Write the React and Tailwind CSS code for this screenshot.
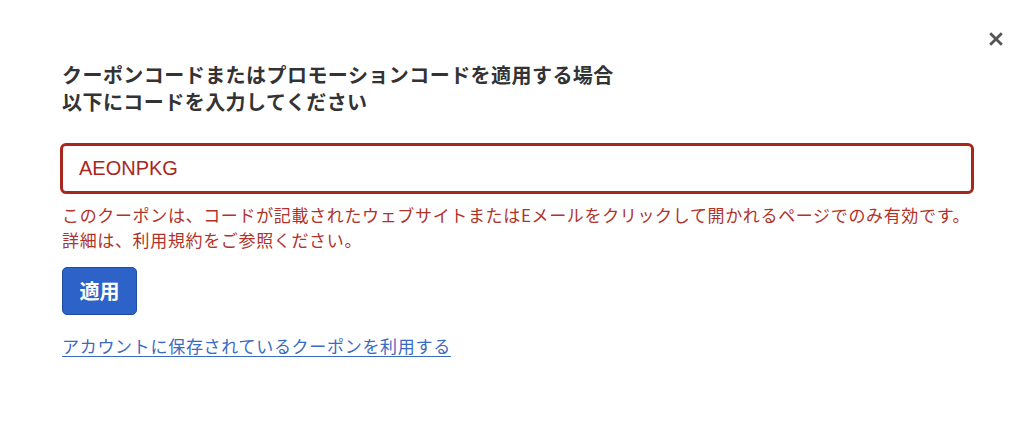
import { useState } from "react";

export default function App() {
  const [code, setCode] = useState("AEONPKG");

  return (
    <div
      className="relative w-[1024px] h-[430px] bg-white text-[#333333]"
      style={{ fontFamily: '"Noto Sans CJK JP", "Noto Sans", sans-serif' }}
    >
      {/* close */}
      <button className="absolute right-[20px] top-[31px] w-[16px] h-[16px] flex items-center justify-center text-[#555555]">
        <svg viewBox="0 0 16 16" className="w-[14px] h-[14px]">
          <path d="M2.5 2.5 L13.5 13.5 M13.5 2.5 L2.5 13.5" stroke="currentColor" strokeWidth="3.2" strokeLinecap="square" />
        </svg>
      </button>

      <div className="pl-[62px] pr-[50px] pt-[61px]">
        <h2 className="text-[20px] leading-[27px] font-bold tracking-[0.45px]">
          クーポンコードまたはプロモーションコードを適用する場合
          <br />
          以下にコードを入力してください
        </h2>

        <input
          value={code}
          onChange={(e) => setCode(e.target.value)}
          className="mt-[28px] -ml-[2px] block w-[914px] h-[51px] rounded-[6px] border-[3px] border-[#a8271d] px-[16px] text-[20px] text-[#a8271d] outline-none"
          style={{ fontFamily: '"Liberation Sans", "Noto Sans CJK JP", sans-serif' }}
        />

        <p className="mt-[8px] text-[17px] leading-[25px] text-[#b0332a] tracking-[0.65px]">
          このクーポンは、コードが記載されたウェブサイトまたはEメールをクリックして開かれるページでのみ有効です。
          <br />
          詳細は、利用規約をご参照ください。
        </p>

        <button className="mt-[15px] block w-[75px] h-[48px] rounded-[5px] bg-[#2d63c8] border border-[#1f4d9e] text-white text-[20px] font-semibold">
          適用
        </button>

        <a href="#" className="mt-[18px] inline-block text-[17px] leading-[25px] text-[#3a6ac2] underline underline-offset-[3px] tracking-[0.7px]">
          アカウントに保存されているクーポンを利用する
        </a>
      </div>
    </div>
  );
}
